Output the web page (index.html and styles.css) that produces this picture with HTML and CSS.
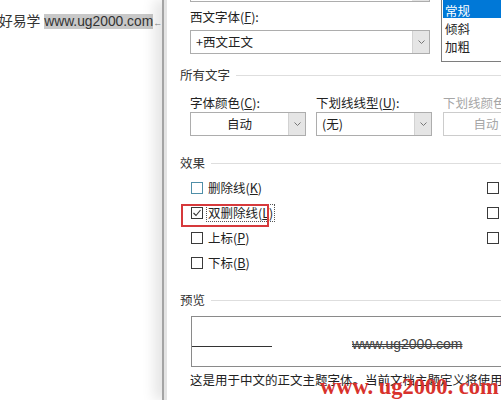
FILE: index.html
```html
<!DOCTYPE html>
<html lang="zh-CN">
<head>
    <meta charset="UTF-8">
    <meta name="viewport" content="width=device-width, initial-scale=1.0">
    <title>字体</title>
    <link rel="stylesheet" href="styles.css">
</head>
<body>
    <div class="screen">
        <div class="doc">
            <p class="doc-line">好易学 <span class="selected">www.ug2000.com</span><span class="para-mark">←</span></p>
        </div>

        <div class="dialog">
            <div class="top-row">
                <div class="top-fields">
                    <div class="combo-stub"><span class="stub-btn"></span></div>
                    <label class="field-label">西文字体(<u>F</u>):</label>
                    <div class="combo">
                        <span class="combo-text">+西文正文</span>
                        <span class="combo-btn"><svg width="7" height="4" viewBox="0 0 7 4"><path d="M0.5 0.5 L3.5 3.5 L6.5 0.5" fill="none" stroke="#777"/></svg></span>
                    </div>
                </div>
                <ul class="listbox">
                    <li class="active">常规</li>
                    <li>倾斜</li>
                    <li>加粗</li>
                </ul>
            </div>

            <div class="section-title"><span>所有文字</span></div>
            <div class="field-row">
                <div class="field">
                    <label class="field-label">字体颜色(<u>C</u>):</label>
                    <div class="combo">
                        <span class="combo-text center">自动</span>
                        <span class="combo-btn"><svg width="7" height="4" viewBox="0 0 7 4"><path d="M0.5 0.5 L3.5 3.5 L6.5 0.5" fill="none" stroke="#777"/></svg></span>
                    </div>
                </div>
                <div class="field">
                    <label class="field-label">下划线线型(<u>U</u>):</label>
                    <div class="combo">
                        <span class="combo-text">(无)</span>
                        <span class="combo-btn"><svg width="7" height="4" viewBox="0 0 7 4"><path d="M0.5 0.5 L3.5 3.5 L6.5 0.5" fill="none" stroke="#777"/></svg></span>
                    </div>
                </div>
                <div class="field disabled">
                    <label class="field-label">下划线颜色(<u>I</u>):</label>
                    <div class="combo">
                        <span class="combo-text center">自动</span>
                    </div>
                </div>
            </div>

            <div class="section-title effects"><span>效果</span></div>
            <div class="checks">
                <div class="check"><span class="box hover"></span><span>删除线(<u>K</u>)</span></div>
                <div class="check"><span class="box"></span></div>
                <div class="check">
                    <span class="box"><svg width="10" height="10" viewBox="0 0 10 10"><path d="M1.5 5 L4 7.5 L8.5 2" fill="none" stroke="#333" stroke-width="1.1"/></svg></span>
                    <span class="focus">双删除线(<u>L</u>)</span>
                    <span class="mark"></span>
                </div>
                <div class="check"><span class="box"></span></div>
                <div class="check"><span class="box"></span><span>上标(<u>P</u>)</span></div>
                <div class="check"><span class="box"></span></div>
                <div class="check"><span class="box"></span><span>下标(<u>B</u>)</span></div>
            </div>

            <div class="section-title preview-title"><span>预览</span></div>
            <div class="preview">
                <span class="preview-line"></span>
                <span class="preview-text">www.ug2000.com</span>
            </div>
            <p class="note">这是用于中文的正文主题字体。当前文档主题定义将使用哪种字体。</p>
        </div>

        <div class="watermark">www. ug2000. com</div>
    </div>
</body>
</html>
```

FILE: styles.css
```css
* {
    box-sizing: border-box;
    margin: 0;
    padding: 0;
}

body {
    width: 501px;
    height: 400px;
    overflow: hidden;
    background: #ffffff;
    font-family: "Noto Sans CJK SC", "Liberation Sans", sans-serif;
    font-size: 12.5px;
    color: #222222;
}

.screen {
    position: relative;
    display: flex;
    height: 400px;
    overflow: hidden;
}

/* document behind the dialog */
.doc {
    width: 162px;
    flex-shrink: 0;
    padding-top: 12px;
    overflow: hidden;
    white-space: nowrap;
}

.doc-line {
    margin-left: -1px;
    font-family: "Liberation Sans", "Noto Sans CJK SC", sans-serif;
    font-size: 13.8px;
    line-height: 20px;
    color: #333333;
}

.selected {
    background: #c8c8c8;
}

.para-mark {
    font-size: 9px;
    color: #8a8a8a;
}

/* font dialog */
.dialog {
    position: relative;
    flex: 1;
    min-width: 0;
    overflow: hidden;
    padding-left: 16px;
    border-left: 2px solid #a4a4a4;
    box-shadow: inset 3px 0 0 #e4e4e4, -8px 0 12px rgba(0, 0, 0, 0.1);
}

.top-row {
    display: flex;
    gap: 11px;
    height: 62px;
    padding-left: 10px;
}

.top-fields {
    width: 240px;
    flex-shrink: 0;
}

.combo-stub {
    display: flex;
    justify-content: flex-end;
    height: 2px;
    border: 1px solid #adadad;
    border-top: none;
}

.stub-btn {
    width: 17px;
    background: #e3e3e3;
}

.field-label {
    display: block;
    margin-top: 7px;
    line-height: 16px;
    white-space: nowrap;
}

.combo {
    display: flex;
    height: 24px;
    margin-top: 5px;
    border: 1px solid #adadad;
    background: #ffffff;
}

.combo-text {
    flex: 1;
    padding-left: 5px;
    line-height: 22px;
    white-space: nowrap;
}

.combo-text.center {
    padding-left: 0;
    text-align: center;
}

.combo-btn {
    display: flex;
    align-items: center;
    justify-content: center;
    width: 17px;
    background: #e5e5e5;
    border-left: 1px solid #d2d2d2;
}

.listbox {
    width: 80px;
    height: 63px;
    flex-shrink: 0;
    margin-top: -1px;
    padding: 0 1px;
    list-style: none;
    border: 1px solid #7e7e7e;
}

.listbox li {
    height: 18px;
    padding: 2px 0 0 2px;
    line-height: 17px;
}

.listbox li.active {
    background: #0078d7;
    color: #ffffff;
}

.section-title {
    display: flex;
    align-items: center;
    gap: 6px;
    margin-top: 5px;
    line-height: 16px;
    color: #333333;
}

.section-title::after {
    content: "";
    flex: 1;
    height: 1px;
    background: #dedede;
}

.section-title.effects {
    margin-top: 19px;
}

.section-title.preview-title {
    margin-top: 17px;
}

.field-row {
    display: flex;
    margin-top: 12px;
    padding-left: 10px;
}

.field {
    width: 116px;
    flex-shrink: 0;
}

.field + .field {
    margin-left: 10px;
}

.field:last-child {
    margin-left: 11px;
}

.field .field-label {
    margin-top: 0;
}

.field .combo {
    margin-top: 1px;
}

.field.disabled .field-label,
.field.disabled .combo-text {
    color: #a6a6a6;
}

.field.disabled .combo-text {
    padding-right: 30px;
}

.field.disabled .combo {
    border-color: #cccccc;
}

/* effect checkboxes */
.checks {
    display: grid;
    grid-template-columns: 296px auto;
    margin-top: 4px;
    padding-left: 11px;
}

.check {
    position: relative;
    display: flex;
    align-items: center;
    gap: 5px;
    height: 25px;
    white-space: nowrap;
}

.box {
    display: flex;
    align-items: center;
    justify-content: center;
    width: 12px;
    height: 12px;
    flex-shrink: 0;
    border: 1px solid #3a3a3a;
    background: #ffffff;
}

.box.hover {
    border-color: #4f8fa8;
}

.focus {
    padding: 0 1px;
    outline: 1px dotted #555555;
    line-height: 16px;
    margin-left: -1px;
}

.mark {
    position: absolute;
    left: -10px;
    top: 4px;
    width: 88px;
    height: 23px;
    border: 2px solid #d6393b;
}

/* preview */
.preview {
    display: flex;
    align-items: flex-start;
    width: 330px;
    height: 51px;
    margin: 8px 0 0 11px;
    padding-top: 19px;
    border: 1px solid #8a8a8a;
}

.preview-line {
    width: 80px;
    height: 1px;
    margin-top: 10px;
    background: #333333;
}

.preview-text {
    margin-left: 80px;
    font-family: "Liberation Sans", sans-serif;
    font-size: 14px;
    line-height: 16px;
    color: #444444;
    text-decoration: line-through double #444444;
}

.note {
    margin-top: 5px;
    padding-left: 10px;
    line-height: 16px;
    white-space: nowrap;
}

.watermark {
    position: absolute;
    left: 320px;
    top: 374px;
    font-family: "Liberation Serif", serif;
    font-weight: bold;
    font-size: 22.5px;
    line-height: 26px;
    color: #d8322c;
    white-space: nowrap;
}
```
